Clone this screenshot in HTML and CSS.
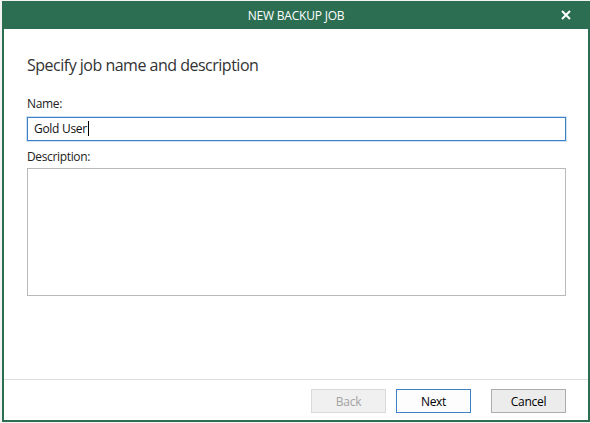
FILE: index.html
```html
<!DOCTYPE html>
<html lang="en">
<head>
    <meta charset="UTF-8">
    <title>New Backup Job</title>
    <link rel="stylesheet" href="styles.css">
</head>
<body>
    <div class="window">
        <div class="title-bar">
            <span class="title">NEW BACKUP JOB</span>
            <svg class="close" width="10" height="10" viewBox="0 0 10 10">
                <path d="M1 1 L9 9 M9 1 L1 9" stroke="#ffffff" stroke-width="2" fill="none"/>
            </svg>
        </div>

        <div class="page">
            <h2 class="page-title">Specify job name and description</h2>

            <label class="field-label" for="jobName">Name:</label>
            <div class="text-input focused" id="jobName">Gold User<span class="caret"></span></div>

            <label class="field-label field-label-tight" for="jobDesc">Description:</label>
            <div class="text-area" id="jobDesc"></div>
        </div>

        <div class="footer">
            <button class="btn" disabled>Back</button>
            <button class="btn btn-default">Next</button>
            <button class="btn btn-cancel">Cancel</button>
        </div>
    </div>
</body>
</html>
```

FILE: styles.css
```css
/* Base */
body {
    margin: 0;
    padding: 1px 0 0 2px;
    background-color: #f3f3f3;
    font-family: 'Open Sans', 'Noto Sans', sans-serif;
}

/* Window frame */
.window {
    width: 584px;
    height: 419px;
    border: 2px solid #2c6e51;
    border-top: none;
    background-color: #ffffff;
    display: flex;
    flex-direction: column;
}

.title-bar {
    height: 28px;
    background-color: #2c6e51;
    color: #ffffff;
    display: flex;
    align-items: center;
    justify-content: center;
    position: relative;
}

.title {
    font-size: 12px;
    letter-spacing: -0.2px;
}

.close {
    position: absolute;
    right: 17px;
    top: 9px;
}

/* Wizard page */
.page {
    flex: 1;
    padding: 25px 22px 0 23px;
    display: flex;
    flex-direction: column;
}

.page-title {
    margin: 0 0 20px 0;
    font-size: 16px;
    font-weight: normal;
    line-height: 22px;
    letter-spacing: -0.5px;
    color: #333333;
}

.field-label {
    font-size: 12px;
    line-height: 16px;
    letter-spacing: -0.35px;
    color: #222222;
    margin-bottom: 5px;
}

.field-label-tight {
    margin-bottom: 3px;
}

.text-input {
    height: 22px;
    border: 1px solid #c4c4c4;
    padding: 0 6px;
    font-size: 12px;
    line-height: 22px;
    letter-spacing: -0.3px;
    color: #111111;
    margin-bottom: 8px;
}

.text-input.focused {
    border-color: #3d80c4;
    box-shadow: 0 0 0 1px #cfe2f3;
}

.caret {
    display: inline-block;
    width: 1px;
    height: 15px;
    background-color: #000000;
    vertical-align: -3px;
    margin-left: 1px;
}

.text-area {
    height: 126px;
    border: 1px solid #b9b9b9;
}

/* Footer with buttons */
.footer {
    height: 41px;
    border-top: 1px solid #dedede;
    display: flex;
    justify-content: flex-end;
    align-items: flex-start;
    padding: 9px 22px 0 0;
    box-sizing: border-box;
    gap: 10px;
}

.btn {
    width: 75px;
    height: 24px;
    font-family: inherit;
    font-size: 12px;
    letter-spacing: -0.3px;
    color: #000000;
    background-color: #f0f0f0;
    border: 1px solid #d9d9d9;
    padding: 0;
}

.btn:disabled {
    color: #a3a3a3;
}

.btn-default {
    background-color: #fdfdfd;
    border-color: #3d80c4;
}

.btn-cancel {
    margin-left: 10px;
    background-color: #ececec;
    border-color: #acacac;
}
```
